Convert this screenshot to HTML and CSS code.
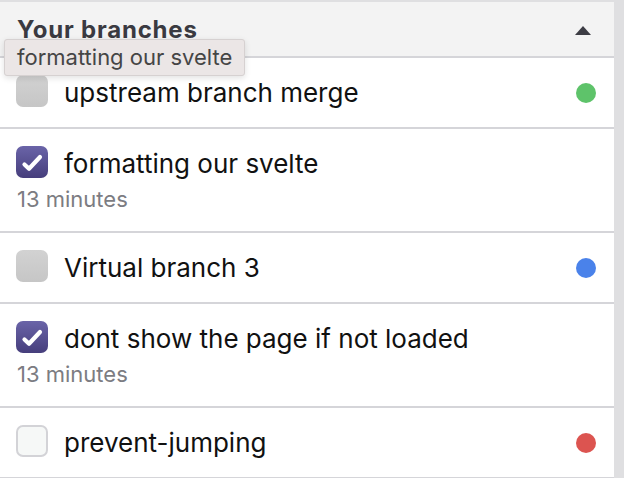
FILE: index.html
```html
<!DOCTYPE html>
<html>
<head>
<meta charset="utf-8">
<link rel="stylesheet" href="styles.css">
</head>
<body>
<div class="frame">
  <section class="panel">
    <header class="panel-head">
      <h2 class="title">Your branches</h2>
      <span class="caret"></span>
    </header>
    <ul class="list">
      <li class="row">
        <span class="box"></span>
        <div class="name">upstream branch merge</div>
        <span class="dot green"></span>
      </li>
      <li class="row">
        <span class="box checked"><svg viewBox="0 0 32 32" width="32" height="32"><path d="M8.5 18.5l4.5 4.2L24 11" fill="none" stroke="#fff" stroke-width="4.2" stroke-linecap="round" stroke-linejoin="round"/></svg></span>
        <div class="name">formatting our svelte</div>
        <div class="meta">13 minutes</div>
      </li>
      <li class="row">
        <span class="box"></span>
        <div class="name">Virtual branch 3</div>
        <span class="dot blue"></span>
      </li>
      <li class="row">
        <span class="box checked"><svg viewBox="0 0 32 32" width="32" height="32"><path d="M8.5 18.5l4.5 4.2L24 11" fill="none" stroke="#fff" stroke-width="4.2" stroke-linecap="round" stroke-linejoin="round"/></svg></span>
        <div class="name">dont show the page if not loaded</div>
        <div class="meta">13 minutes</div>
      </li>
      <li class="row">
        <span class="box light"></span>
        <div class="name">prevent-jumping</div>
        <span class="dot red"></span>
      </li>
    </ul>
    <div class="tooltip">formatting our svelte</div>
  </section>
</div>
</body>
</html>
```
FILE: styles.css
```css
html, body {
  margin: 0;
  padding: 0;
  height: 100%;
  overflow: hidden;
}
body {
  background: #dfdfe1;
  font-family: Inter, "Noto Sans", sans-serif;
}
.frame {
  padding: 2px 10px 0 0;
  height: 100%;
  box-sizing: border-box;
}
.panel {
  position: relative;
  background: #fff;
  height: 100%;
}
.panel-head {
  height: 54px;
  background: #f3f3f3;
  border-bottom: 2px solid #d5d5d9;
  display: flex;
  align-items: center;
  justify-content: space-between;
  padding: 0 23px 0 17px;
}
.title {
  margin: 0;
  font-size: 24px;
  letter-spacing: 0.8px;
  font-weight: 700;
  color: #3a3a41;
  position: relative;
  top: 0;
}
.caret {
  width: 0;
  height: 0;
  border-left: 8px solid transparent;
  border-right: 8px solid transparent;
  border-bottom: 9px solid #3d3d44;
  position: relative;
  top: 1px;
}
.list {
  list-style: none;
  margin: 0;
  padding: 0;
}
.row {
  display: grid;
  grid-template-columns: 32px 1fr auto;
  column-gap: 16px;
  align-items: start;
  padding: 17px 18px 17px 16px;
  border-bottom: 2px solid #d5d5d9;
}
.box {
  width: 32px;
  height: 32px;
  border-radius: 7px;
  background: linear-gradient(#d2d2d2, #c6c6c6);
  box-sizing: border-box;
  display: block;
}
.box svg { display: block; }
.box.checked {
  background: linear-gradient(#6a64a8, #463e7c);
}
.box.light {
  background: #f6f8f7;
  border: 2.5px solid #d3d3d7;
}
.name {
  font-size: 26px;
  line-height: 35px;
  color: #111;
  white-space: nowrap;
}
.meta {
  grid-column: 1 / -1;
  font-size: 22px;
  line-height: 30px;
  padding-top: 3px;
  color: #7c7c82;
  padding-left: 1px;
}
.dot {
  width: 20px;
  height: 20px;
  border-radius: 50%;
  margin-top: 8px;
}
.green { background: #5ec36a; }
.blue { background: #4a82ea; }
.red { background: #dc5450; }
.tooltip {
  position: absolute;
  left: 4px;
  top: 37px;
  height: 37px;
  box-sizing: border-box;
  padding: 0 12px;
  background: #ebe6e6;
  border: 1px solid #d6d1d1;
  border-radius: 3px;
  box-shadow: 0 2px 6px rgba(0,0,0,0.12);
  font-size: 22px;
  line-height: 35px;
  color: #454545;
  white-space: nowrap;
}
```
